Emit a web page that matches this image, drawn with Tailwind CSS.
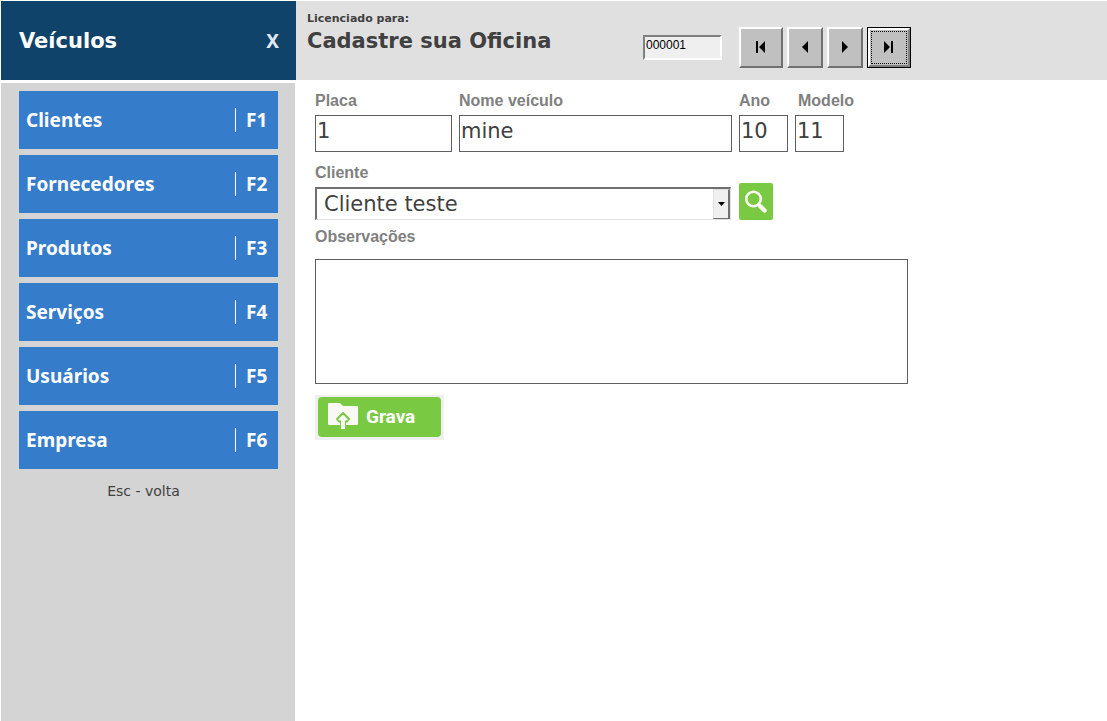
<!DOCTYPE html>
<html lang="pt-BR">
<head>
  <meta charset="UTF-8" />
  <meta name="viewport" content="width=device-width, initial-scale=1.0" />
  <title>Veículos</title>
  <script src="https://cdn.jsdelivr.net/npm/@tailwindcss/browser@4"></script>
</head>
<body class="min-h-screen flex flex-col bg-white pt-px pl-px text-[#404040] font-['DejaVu_Sans',sans-serif]">

  <!-- Topo -->
  <header class="flex h-[79px] bg-[#e0e0e0]">
    <div class="flex w-[295px] shrink-0 items-center justify-between bg-[#10436a] pt-0.5 pl-[18px] pr-[17px] text-white">
      <h1 class="text-[21px] font-bold">Veículos</h1>
      <button type="button" aria-label="Fechar" class="text-[19px] font-bold text-[#e3e9ee] font-['Noto_Sans',sans-serif]">X</button>
    </div>
    <div class="w-[336px] shrink-0 pt-2 pl-[11px] font-bold">
      <p class="text-[11px] leading-5">Licenciado para:</p>
      <p class="text-[21px] leading-6">Cadastre sua Oficina</p>
    </div>
    <div class="flex items-start gap-[17px] pt-[26px] pl-[11px]">
      <input type="text" value="000001" aria-label="Código" class="mt-2 h-[25px] w-[79px] border-2 border-t-[#808080] border-l-[#808080] border-r-white border-b-white bg-[#efefef] px-px pb-1.5 text-xs text-black font-['Liberation_Sans_Narrow','Liberation_Sans',sans-serif]" />
      <div class="flex gap-1">
        <button type="button" aria-label="Primeiro" class="flex h-[41px] w-11 items-center justify-center border-2 border-t-white border-l-white border-r-[#707070] border-b-[#707070] bg-[#c0c0c0] pb-0.5">
          <svg width="10" height="12" viewBox="0 0 10 12"><path d="M0 0h2v12H0zM9 0v12L3 6z" /></svg>
        </button>
        <button type="button" aria-label="Anterior" class="flex h-[41px] w-9 items-center justify-center border-2 border-t-white border-l-white border-r-[#707070] border-b-[#707070] bg-[#c0c0c0] pb-0.5">
          <svg width="6" height="12" viewBox="0 0 6 12"><path d="M6 0v12L0 6z" /></svg>
        </button>
        <button type="button" aria-label="Próximo" class="flex h-[41px] w-9 items-center justify-center border-2 border-t-white border-l-white border-r-[#707070] border-b-[#707070] bg-[#c0c0c0] pb-0.5">
          <svg width="6" height="12" viewBox="0 0 6 12"><path d="M0 0v12l6-6z" /></svg>
        </button>
        <button type="button" aria-label="Último" class="h-[41px] w-11 border border-black bg-[#c0c0c0]">
          <span class="flex h-full border-2 border-t-white border-l-white border-r-[#808080] border-b-[#808080] p-px">
            <span class="flex grow items-center justify-center border border-dotted border-black pr-0.5 pb-0.5">
              <svg width="10" height="12" viewBox="0 0 10 12"><path d="M8 0h2v12H8zM1 0v12l6-6z" /></svg>
            </span>
          </span>
        </button>
      </div>
    </div>
  </header>

  <div class="flex grow">

    <!-- Menu lateral -->
    <aside class="mt-[3px] w-[294px] shrink-0 bg-[#d4d4d4] pt-2 pl-[18px] pr-[17px]">
      <nav class="flex flex-col gap-1.5 text-[19px] font-bold text-white font-['Noto_Sans',sans-serif]">
        <a href="#clientes" class="flex h-[58px] items-center justify-between bg-[#357ccb] pl-[7px]">
          Clientes <span class="flex h-6 w-[43px] items-center border-l border-white pl-2.5">F1</span>
        </a>
        <a href="#fornecedores" class="flex h-[58px] items-center justify-between bg-[#357ccb] pl-[7px]">
          Fornecedores <span class="flex h-6 w-[43px] items-center border-l border-white pl-2.5">F2</span>
        </a>
        <a href="#produtos" class="flex h-[58px] items-center justify-between bg-[#357ccb] pl-[7px]">
          Produtos <span class="flex h-6 w-[43px] items-center border-l border-white pl-2.5">F3</span>
        </a>
        <a href="#servicos" class="flex h-[58px] items-center justify-between bg-[#357ccb] pl-[7px]">
          Serviços <span class="flex h-6 w-[43px] items-center border-l border-white pl-2.5">F4</span>
        </a>
        <a href="#usuarios" class="flex h-[58px] items-center justify-between bg-[#357ccb] pl-[7px]">
          Usuários <span class="flex h-6 w-[43px] items-center border-l border-white pl-2.5">F5</span>
        </a>
        <a href="#empresa" class="flex h-[58px] items-center justify-between bg-[#357ccb] pl-[7px]">
          Empresa <span class="flex h-6 w-[43px] items-center border-l border-white pl-2.5">F6</span>
        </a>
      </nav>
      <p class="mt-3 pr-2.5 text-center text-sm leading-5">Esc - volta</p>
    </aside>

    <!-- Cadastro -->
    <main class="grow pt-[11px] pl-5">
      <form class="max-w-[593px]">
        <div class="flex gap-[7px]">
          <div class="w-[137px]">
            <label for="placa" class="mb-1 block text-base leading-5 font-bold text-[#808080] font-['Liberation_Sans',sans-serif]">Placa</label>
            <input id="placa" type="text" value="1" class="h-[37px] w-full border border-[#606064] px-px pb-1.5 text-[21px]" />
          </div>
          <div class="w-[273px]">
            <label for="nome" class="mb-1 block text-base leading-5 font-bold text-[#808080] font-['Liberation_Sans',sans-serif]">Nome veículo</label>
            <input id="nome" type="text" value="mine" class="h-[37px] w-full border border-[#606064] px-px pb-1.5 text-[21px]" />
          </div>
          <div class="w-[49px]">
            <label for="ano" class="mb-1 block text-base leading-5 font-bold text-[#808080] font-['Liberation_Sans',sans-serif]">Ano</label>
            <input id="ano" type="text" value="10" class="h-[37px] w-full border border-[#606064] px-px pb-1.5 text-[21px]" />
          </div>
          <div class="w-[49px]">
            <label for="modelo" class="mb-1 block pl-[3px] text-base leading-5 font-bold text-[#808080] font-['Liberation_Sans',sans-serif]">Modelo</label>
            <input id="modelo" type="text" value="11" class="h-[37px] w-full border border-[#606064] px-px pb-1.5 text-[21px]" />
          </div>
        </div>

        <div class="mt-[11px] flex items-end gap-2">
          <div class="w-[416px]">
            <label for="cliente" class="mb-1 block text-base leading-5 font-bold text-[#808080] font-['Liberation_Sans',sans-serif]">Cliente</label>
            <div class="relative">
              <select id="cliente" class="block h-[33px] w-full appearance-none border-t-2 border-r border-b border-l-2 border-t-[#707070] border-l-[#707070] border-r-[#e0e0e0] border-b-[#e0e0e0] bg-white pl-[7px] text-[21px]">
                <option>Cliente teste</option>
              </select>
              <span class="pointer-events-none absolute top-0.5 right-px bottom-px flex w-[17px] items-center justify-center border border-t-[#e0e0e0] border-l-[#e0e0e0] border-r-2 border-r-[#707070] border-b-[#707070] bg-[#f0f0f0]">
                <svg width="7" height="4" viewBox="0 0 7 4"><path d="M0 0h7L3.500 4z" fill="#000" /></svg>
              </span>
            </div>
          </div>
          <button type="button" aria-label="Pesquisar cliente" class="flex h-[37px] w-[34px] items-center justify-center rounded-xs bg-[#7ac943]">
            <svg width="24" height="24" viewBox="0 0 24 24" fill="none" stroke="#fbfbf4">
              <circle cx="9.500" cy="9" r="7.300" stroke-width="2.600" />
              <path d="M14.500 14.500l2 2" stroke-width="3" />
              <path d="M16.500 16.500l4 4" stroke-width="4.500" stroke-linecap="round" />
            </svg>
          </button>
        </div>

        <label for="observacoes" class="mt-[7px] mb-3 block text-base leading-5 font-bold text-[#808080] font-['Liberation_Sans',sans-serif]">Observações</label>
        <textarea id="observacoes" class="block h-[125px] w-full resize-none border border-[#606064] p-1 text-[21px]"></textarea>

        <button type="submit" class="mt-[11px] block bg-[#efefef] px-[3px] pt-0.5 pb-[3px]">
          <span class="flex h-10 w-[123px] items-center gap-2 rounded-sm bg-[#7ac943] pl-2.5 text-[19px] font-bold text-white font-['Roboto',sans-serif]">
            <svg width="30" height="28" viewBox="0 0 30 28">
              <path d="M1 0h11l3 3h14a1 1 0 0 1 1 1v17a1 1 0 0 1-1 1H1a1 1 0 0 1-1-1V1a1 1 0 0 1 1-1z" fill="#faf8f4" />
              <path d="M15 10l6 6-2 2.500h-2V25h-4v-6.500h-2L9 16z" fill="#faf8f4" stroke="#7ac943" stroke-width="2" stroke-linejoin="round" />
              <path d="M13 16h4v10h-4z" fill="#faf8f4" />
            </svg>
            Grava
          </span>
        </button>
      </form>
    </main>
  </div>

</body>
</html>
